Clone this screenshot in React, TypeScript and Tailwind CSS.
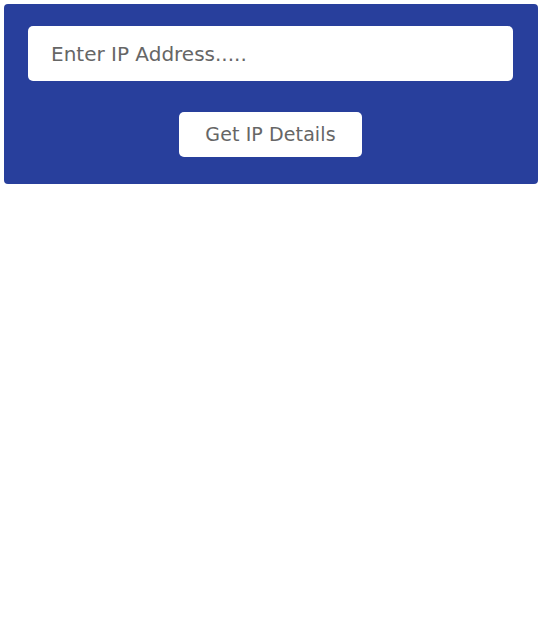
export default function App() {
  return (
    <div className="w-[542px] h-[629px] bg-white pt-1 px-1" style={{ fontFamily: '"DejaVu Sans", sans-serif' }}>
      <div className="bg-[#283f9c] rounded-[4px] pt-[22px] pb-[27px] pl-6 pr-[25px] flex flex-col items-center">
        <input
          type="text"
          placeholder="Enter IP Address....."
          className="w-full h-[55px] rounded-[5px] bg-white px-[23px] text-[20px] text-[#666] placeholder:text-[#666] outline-none"
        />
        <button className="mt-[31px] w-[183px] h-[45px] rounded-[5px] bg-white text-[19px] tracking-[0.1px] text-[#666]">
          Get IP Details
        </button>
      </div>
    </div>
  );
}
